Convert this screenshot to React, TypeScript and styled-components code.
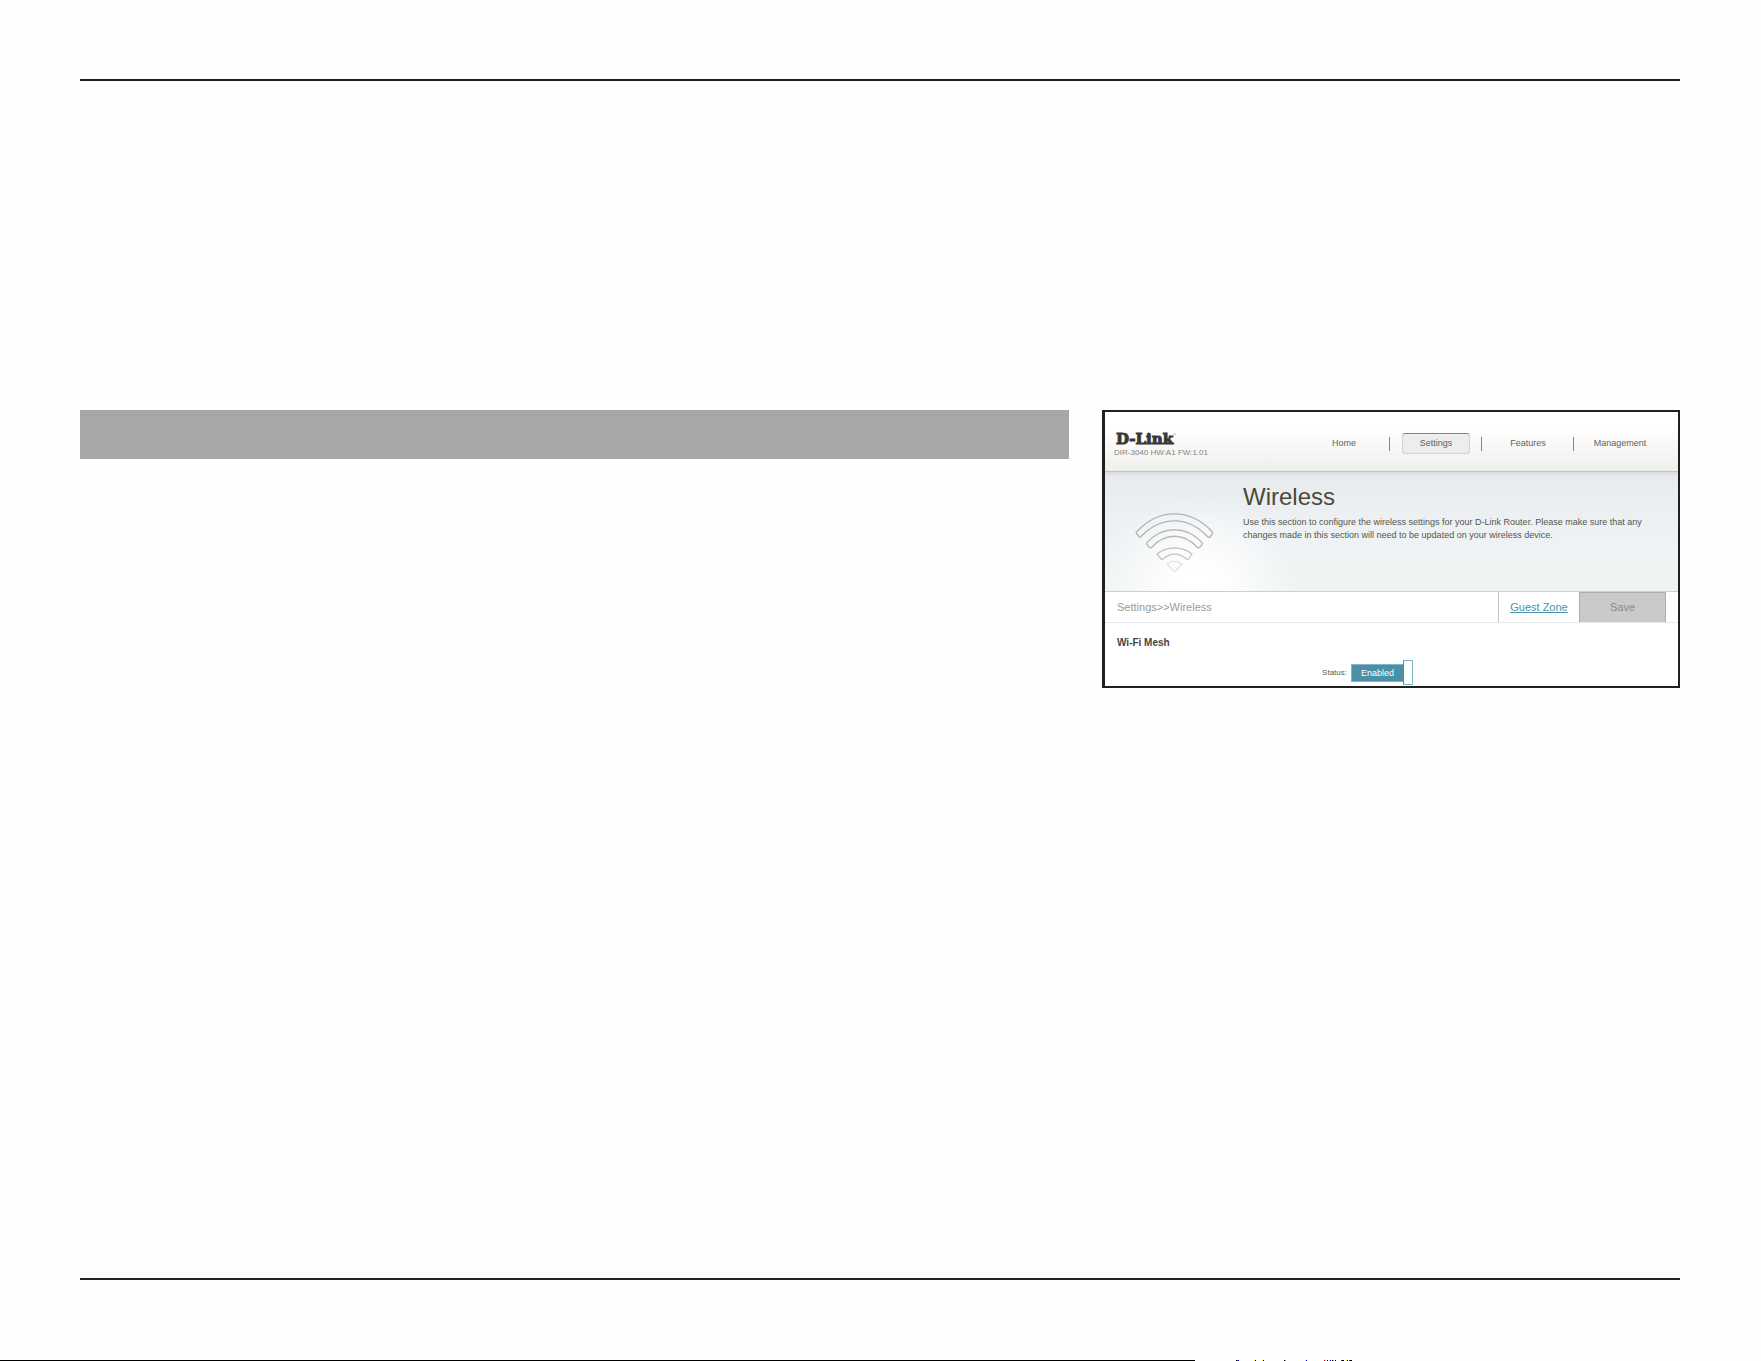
import React, { useState } from "react";
import styled, { createGlobalStyle } from "styled-components";

const ink = "#231f20";
const teal = "#4a91a7";

const GlobalStyle = createGlobalStyle`
  * { box-sizing: border-box; }
  body {
    margin: 0;
    background: #fefefe;
    font-family: "Liberation Sans", Arial, sans-serif;
    color: #5a5a4e;
  }
`;

const Page = styled.div`
  display: flex;
  flex-direction: column;
  min-height: 100vh;
`;

const Sheet = styled.div`
  display: flex;
  flex-direction: column;
  flex: 1;
  padding: 79px 81px 80px 80px;
`;

const Rule = styled.hr`
  width: 100%;
  height: 2px;
  margin: 0;
  border: 0;
  background: ${ink};
`;

const Content = styled.main`
  display: grid;
  grid-template-columns: minmax(0, 1fr) 578px;
  column-gap: 33px;
  align-items: start;
  flex: 1;
  padding-top: 329px;
`;

const HeadingBar = styled.div`
  height: 49px;
  background: #a7a7a5;
`;

const Frame = styled.section`
  border: 2px solid ${ink};
  border-left-width: 3px;
  background: #fff;
`;

const Header = styled.header`
  display: flex;
  justify-content: space-between;
  align-items: center;
  height: 59px;
  padding: 4px 12px 0 9px;
  background: linear-gradient(#fff 25%, #efefee);
`;

const Brand = styled.div`
  display: flex;
  flex-direction: column;
  padding-top: 2px;
`;

const Logo = styled.div`
  padding-left: 2px;
  font: bold 15px/15px "DejaVu Serif", serif;
  -webkit-text-stroke: 1px #383838;
  color: #383838;
  white-space: nowrap;
`;

const Mark = styled.sup`
  font: 4px/4px "Liberation Sans", Arial, sans-serif;
  vertical-align: 8px;
  -webkit-text-stroke: 0;
  color: #888;
`;

const Model = styled.div`
  font-size: 8px;
  line-height: 11px;
  color: #85857f;
`;

const Nav = styled.nav`
  display: grid;
  grid-template-columns: repeat(4, 92px);
`;

const NavCell = styled.div`
  display: flex;
  align-items: center;
  justify-content: center;
  background: linear-gradient(#858585, #858585) right center / 1px 14px no-repeat;
  &:last-child { background: none; }
`;

const NavLink = styled.a<{ $active?: boolean }>`
  width: 68px;
  height: 21px;
  border: 1px solid ${(p) => (p.$active ? "#d3d3d3" : "transparent")};
  border-top-color: ${(p) => (p.$active ? "#858585" : "transparent")};
  border-radius: 3px;
  background: ${(p) => (p.$active ? "#ededed" : "transparent")};
  font-size: 9px;
  line-height: 19px;
  text-align: center;
  text-decoration: none;
  color: #62625c;
`;

const Hero = styled.div`
  display: grid;
  grid-template-columns: 138px 1fr;
  height: 121px;
  border-top: 1px solid #bcc5c7;
  border-bottom: 1px solid #c6d2d0;
  background:
    radial-gradient(ellipse 100px 96px at 92px 118px, #fff 20%, rgba(255, 255, 255, 0)),
    linear-gradient(#d4dadd, #e7ebee 4px, #eef2f4 50%, #f0f4f4);
`;

const WifiIcon = styled.svg`
  width: 79px;
  height: 62px;
  margin: 41px 0 0 30px;
`;

const Title = styled.h1`
  margin: 11px 0 0;
  font-size: 24px;
  font-weight: normal;
  line-height: 28px;
  color: #4b4b35;
`;

const Intro = styled.p`
  max-width: 410px;
  margin: 5px 0 0;
  font-size: 9px;
  line-height: 13px;
  color: #55554b;
`;

const Toolbar = styled.div`
  display: flex;
  align-items: stretch;
  height: 31px;
  padding: 0 12px;
  border-bottom: 1px solid #e8e8e8;
`;

const Crumbs = styled.span`
  flex: 1;
  font-size: 11px;
  line-height: 30px;
  color: #9b9b95;
`;

const GuestLink = styled.a`
  width: 81px;
  border-left: 1px solid #c3c3c3;
  font-size: 11px;
  line-height: 31px;
  text-align: center;
  color: ${teal};
`;

const SaveButton = styled.button`
  width: 87px;
  padding: 0;
  border: 1px solid #adadad;
  border-bottom: 0;
  background: #cacaca;
  font: 11px/29px "Liberation Sans", Arial, sans-serif;
  color: #8a8a85;
`;

const Mesh = styled.div`
  padding: 14px 12px 1px;
`;

const SectionTitle = styled.h2`
  margin: 0;
  font-size: 10px;
  line-height: 12px;
  color: #45453a;
`;

const StatusRow = styled.div`
  display: grid;
  grid-template-columns: 230px auto;
  justify-content: start;
  align-items: center;
  column-gap: 4px;
  margin-top: 11px;
`;

const StatusLabel = styled.label`
  font-size: 8px;
  text-align: right;
`;

const Switch = styled.span`
  position: relative;
  display: flex;
  align-items: center;
`;

const SwitchInput = styled.input`
  position: absolute;
  inset: 0;
  width: 100%;
  height: 100%;
  margin: 0;
  opacity: 0;
  cursor: pointer;
`;

const SwitchText = styled.span<{ $on: boolean }>`
  width: 52px;
  height: 18px;
  border: 1px solid #82b6c4;
  border-right: 0;
  background: ${(p) => (p.$on ? teal : "#a7a7a5")};
  font-size: 9px;
  line-height: 16px;
  text-align: center;
  color: #fff;
`;

const Knob = styled.span`
  width: 10px;
  height: 25px;
  border: 1px solid #82b6c4;
  border-left-color: ${teal};
  background: #fff;
`;

const Footer = styled.footer`
  display: flex;
  height: 1px;
`;

const FooterEdge = styled.div`
  flex: 0 0 1195px;
  background: #000;
`;

const FooterMarks = styled.svg`
  width: 160px;
  height: 1px;
`;

const navItems = ["Home", "Settings", "Features", "Management"];

const marks: [number, number, string][] = [
  [41, 1, "#000"], [42, 1, "#080"], [43, 1, "#00f"],
  [59, 1, "#fe0"], [60, 1, "#000"], [67, 1, "#fe0"], [68, 1, "#000"],
  [89, 1, "#000"], [90, 1, "#0dd"], [110, 1, "#fe0"], [111, 1, "#00f"],
  [129, 1, "#d00"], [130, 1, "#8ee"], [132, 1, "#000"],
  [134, 1, "#fe0"], [135, 1, "#00f"], [137, 1, "#000"], [138, 1, "#0dd"],
  [140, 1, "#000"], [146, 1, "#d00"], [147, 2, "#000"],
  [151, 1, "#fe0"], [152, 1, "#000"], [154, 1, "#d00"], [155, 2, "#000"],
];

function Wifi() {
  return (
    <WifiIcon viewBox="0 0 79 62" fill="none" strokeWidth="1.3" strokeLinejoin="round" aria-hidden="true">
      <path stroke="#b3b3b3" d="M2 18.500Q0.500 19.500 1.500 20.500L4 23.500Q5 24.500 6 23.500C26 2.500 53 2.500 73 24Q74 25 75 24L77.500 20.500Q78 19.500 77 18.500C55-5 24-5 2 18.500Z" />
      <path stroke="#b8b8b8" d="M12 29.500Q11 30.500 12 31.500L14.500 34.500Q15.500 35.500 16.500 34.500C30 19.500 49 19.500 62.500 34.500Q63.500 35.500 64.500 34.500L67 31.500Q67.500 30.500 67 29.500C51 12.500 28 12.500 12 29.500Z" />
      <path stroke="#c6c6c6" d="M22 41C32 33 47 33 57 41L53.500 46Q52.500 47 51.500 46C44 39.500 35 39.500 28 46Q27 47 26 46Z" />
      <path stroke="#e2e2e2" d="M32 51C37 47.500 42 47.500 47 51L41 57.500Q39.500 59 38 57.500Z" />
    </WifiIcon>
  );
}

export default function App() {
  const [enabled, setEnabled] = useState(true);
  return (
    <>
      <GlobalStyle />
      <Page>
        <Sheet>
          <Rule />
          <Content>
            <HeadingBar />
            <Frame>
              <Header>
                <Brand>
                  <Logo>D-Link<Mark>®</Mark></Logo>
                  <Model>DIR-3040 HW:A1 FW:1.01</Model>
                </Brand>
                <Nav>
                  {navItems.map((item) => (
                    <NavCell key={item}>
                      <NavLink href="#" $active={item === "Settings"}>{item}</NavLink>
                    </NavCell>
                  ))}
                </Nav>
              </Header>
              <Hero>
                <Wifi />
                <div>
                  <Title>Wireless</Title>
                  <Intro>
                    Use this section to configure the wireless settings for your D-Link Router. Please make sure that any
                    changes made in this section will need to be updated on your wireless device.
                  </Intro>
                </div>
              </Hero>
              <Toolbar>
                <Crumbs>Settings&gt;&gt;Wireless</Crumbs>
                <GuestLink href="#">Guest Zone</GuestLink>
                <SaveButton type="button">Save</SaveButton>
              </Toolbar>
              <Mesh>
                <SectionTitle>Wi-Fi Mesh</SectionTitle>
                <StatusRow>
                  <StatusLabel htmlFor="mesh-status">Status:</StatusLabel>
                  <Switch>
                    <SwitchText $on={enabled}>{enabled ? "Enabled" : "Disabled"}</SwitchText>
                    <Knob />
                    <SwitchInput
                      id="mesh-status"
                      type="checkbox"
                      checked={enabled}
                      onChange={(e) => setEnabled(e.target.checked)}
                    />
                  </Switch>
                </StatusRow>
              </Mesh>
            </Frame>
          </Content>
          <Rule />
        </Sheet>
        <Footer>
          <FooterEdge />
          <FooterMarks viewBox="0 0 160 1" aria-hidden="true">
            {marks.map(([x, w, fill]) => (
              <rect key={x} x={x} y="0" width={w} height="1" fill={fill} />
            ))}
          </FooterMarks>
        </Footer>
      </Page>
    </>
  );
}
